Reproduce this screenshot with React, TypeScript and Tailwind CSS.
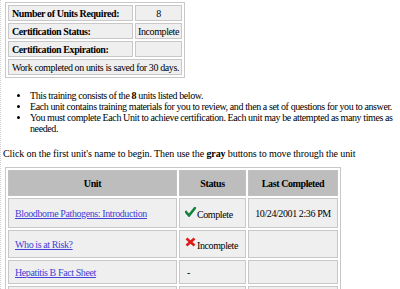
import React from "react";

const cell = "border border-[#c8c8c8] bg-[#efefef]";

function Check() {
  return (
    <svg width="11" height="10" viewBox="0 0 11 10" className="inline-block align-[-1px] mr-[1px]">
      <path d="M1 5 L4 8.5 L10 1" stroke="#14833a" strokeWidth="2.6" fill="none" strokeLinecap="square" />
    </svg>
  );
}

function Cross() {
  return (
    <svg width="11" height="10" viewBox="0 0 11 10" className="inline-block align-[-1px] mr-[1px]">
      <path d="M1.5 1.5 L9.5 8.5 M9.5 1.5 L1.5 8.5" stroke="#e01818" strokeWidth="2.6" fill="none" />
    </svg>
  );
}

export default function App() {
  return (
    <div
      className="w-[400px] h-[289px] overflow-hidden bg-white text-black border-l border-dotted border-[#cfcfcf] text-[10px] leading-[11px] tracking-[-0.4px]"
      style={{ fontFamily: '"Liberation Serif", "Times New Roman", serif' }}
    >
      <div className="pt-[2px] pl-[4px]">
        <table className="border-separate border-spacing-[2px] border border-[#c8c8c8] w-[180px]">
          <tbody>
            <tr className="h-[16px]">
              <td className={`${cell} font-bold pl-[3px] w-[125px]`}>Number of Units Required:</td>
              <td className={`${cell} text-center`}>8</td>
            </tr>
            <tr className="h-[16px]">
              <td className={`${cell} font-bold pl-[3px]`}>Certification Status:</td>
              <td className={`${cell} text-center`}>Incomplete</td>
            </tr>
            <tr className="h-[16px]">
              <td className={`${cell} font-bold pl-[3px]`}>Certification Expiration:</td>
              <td className={cell}></td>
            </tr>
            <tr className="h-[16px]">
              <td colSpan={2} className={`${cell} pl-[3px] whitespace-nowrap`}>
                Work completed on units is saved for 30 days.
              </td>
            </tr>
          </tbody>
        </table>
      </div>

      <ul className="mt-[12px] pl-[29px] pr-[4px] list-disc">
        <li>This training consists of the <b>8</b> units listed below.</li>
        <li>Each unit contains training materials for you to review, and then a set of questions for you to answer.</li>
        <li>You must complete Each Unit to achieve certification. Each unit may be attempted as many times as needed.</li>
      </ul>

      <p className="mt-[14px] pl-[2px] tracking-[-0.1px]">
        Click on the first unit's name to begin. Then use the <b>gray</b> buttons to move through the unit
      </p>

      <div className="pt-[8px] pl-[4px]">
        <table className="border-separate border-spacing-[2px] border border-[#c8c8c8] w-[336px]">
          <tbody>
            <tr className="h-[26px] font-bold">
              <td className="border border-[#c0c0c0] bg-[#bdbdbd] text-center w-[169px]">Unit</td>
              <td className="border border-[#c0c0c0] bg-[#bdbdbd] text-center w-[67px]">Status</td>
              <td className="border border-[#c0c0c0] bg-[#bdbdbd] text-center">Last Completed</td>
            </tr>
            <tr className="h-[30px]">
              <td className={`${cell} pl-[6px]`}>
                <a className="text-[#4242d8] underline">Bloodborne Pathogens: Introduction</a>
              </td>
              <td className={`${cell} pl-[5px] whitespace-nowrap`}>
                <Check />
                <span className="align-[-2px]">Complete</span>
              </td>
              <td className={`${cell} text-center whitespace-nowrap`}>10/24/2001 2:36 PM</td>
            </tr>
            <tr className="h-[28px]">
              <td className={`${cell} pl-[6px]`}>
                <a className="text-[#4242d8] underline">Who is at Risk?</a>
              </td>
              <td className={`${cell} pl-[5px] whitespace-nowrap`}>
                <Cross />
                <span className="align-[-3px]">Incomplete</span>
              </td>
              <td className={cell}></td>
            </tr>
            <tr className="h-[24px]">
              <td className={`${cell} pl-[6px]`}>
                <a className="text-[#4242d8] underline">Hepatitis B Fact Sheet</a>
              </td>
              <td className={`${cell} pl-[7px]`}>-</td>
              <td className={cell}></td>
            </tr>
            <tr className="h-[24px]">
              <td className={`${cell} pl-[6px]`}></td>
              <td className={cell}></td>
              <td className={cell}></td>
            </tr>
          </tbody>
        </table>
      </div>
    </div>
  );
}
